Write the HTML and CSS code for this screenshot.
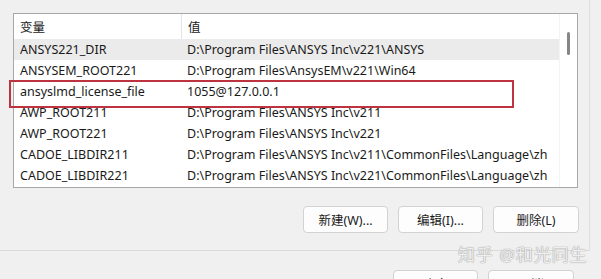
FILE: index.html
```html
<!DOCTYPE html>
<html lang="zh-CN">
<head>
    <meta charset="UTF-8">
    <title>环境变量</title>
    <link rel="stylesheet" href="styles.css">
</head>
<body>

    <div class="group">
        <div class="list">
            <div class="rows">
                <div class="row head">
                    <div class="cell name">变量</div>
                    <div class="cell value">值</div>
                </div>
                <div class="row selected">
                    <div class="cell name">ANSYS221_DIR</div>
                    <div class="cell value">D:\Program Files\ANSYS Inc\v221\ANSYS</div>
                </div>
                <div class="row">
                    <div class="cell name">ANSYSEM_ROOT221</div>
                    <div class="cell value">D:\Program Files\AnsysEM\v221\Win64</div>
                </div>
                <div class="row">
                    <div class="cell name">ansyslmd_license_file</div>
                    <div class="cell value">1055@127.0.0.1</div>
                </div>
                <div class="row">
                    <div class="cell name">AWP_ROOT211</div>
                    <div class="cell value">D:\Program Files\ANSYS Inc\v211</div>
                </div>
                <div class="row">
                    <div class="cell name">AWP_ROOT221</div>
                    <div class="cell value">D:\Program Files\ANSYS Inc\v221</div>
                </div>
                <div class="row">
                    <div class="cell name">CADOE_LIBDIR211</div>
                    <div class="cell value">D:\Program Files\ANSYS Inc\v211\CommonFiles\Language\zh</div>
                </div>
                <div class="row">
                    <div class="cell name">CADOE_LIBDIR221</div>
                    <div class="cell value">D:\Program Files\ANSYS Inc\v221\CommonFiles\Language\zh</div>
                </div>
            </div>
            <div class="scrollbar">
                <div class="thumb"></div>
            </div>
            <!-- 标注框 -->
            <div class="mark"></div>
        </div>

        <div class="actions">
            <button class="button">新建(W)...</button>
            <button class="button">编辑(I)...</button>
            <button class="button wide">删除(L)</button>
        </div>
    </div>

    <div class="footer">
        <button class="button">确定</button>
        <button class="button wide">取消</button>
    </div>

    <div class="watermark">知乎 @和光同生</div>

</body>
</html>
```

FILE: styles.css
```css
body {
    margin: 0;
    width: 601px;
    height: 279px;
    overflow: hidden;
    background-color: #f0f0f0;
    color: #1a1a1a;
    font-family: "Noto Sans", "Noto Sans CJK SC", sans-serif;
    font-size: 12.5px;
    position: relative;
}

.group {
    width: 576px;
    height: 237px;
    padding: 13px 0 0 13px;
    border-right: 1px solid #dedede;
    border-bottom: 1px solid #dadada;
}

.list {
    position: relative;
    display: flex;
    width: 563px;
    height: 173px;
    background-color: #ffffff;
    border: 1px solid #a8a8a8;
}

.rows {
    flex: 1;
}

.row {
    display: flex;
    height: 21px;
    align-items: center;
    white-space: nowrap;
}

.row.head {
    height: 25px;
}

.row.selected {
    background-color: #ebebeb;
}

.cell {
    padding-left: 6px;
    overflow: hidden;
}

.cell.name {
    width: 161px;
    flex: none;
}

.head .cell {
    height: 25px;
    line-height: 27px;
}

.head .cell.name {
    border-right: 1px solid #e5e5e5;
}

.scrollbar {
    width: 17px;
    flex: none;
    border-left: 1px solid #f3f3f3;
}

.thumb {
    width: 3px;
    height: 23px;
    margin: 18px 0 0 7px;
    background-color: #868686;
    border-radius: 2px;
}

/* 红色标注框 */
.mark {
    position: absolute;
    left: -5px;
    top: 66px;
    width: 501px;
    height: 24px;
    border: 2px solid #bd3340;
}

.actions {
    display: flex;
    gap: 10px;
    margin: 18px 0 0 290px;
}

.button {
    width: 85px;
    height: 27px;
    padding: 0;
    background-color: #fdfdfd;
    border: 1px solid #d2d2d2;
    border-radius: 4px;
    font-family: "Noto Sans", "Noto Sans CJK SC", sans-serif;
    font-size: 12.5px;
    color: #1a1a1a;
}

.button.wide {
    width: 86px;
}

.footer {
    display: flex;
    gap: 10px;
    margin: 19px 0 0 393px;
}

.watermark {
    position: absolute;
    left: 458px;
    top: 241px;
    font-size: 17px;
    color: rgba(255, 255, 255, 0.85);
    text-shadow: 0 0 1px #9a9a9a, 0 0 1px #9a9a9a;
    letter-spacing: 1px;
}
```
